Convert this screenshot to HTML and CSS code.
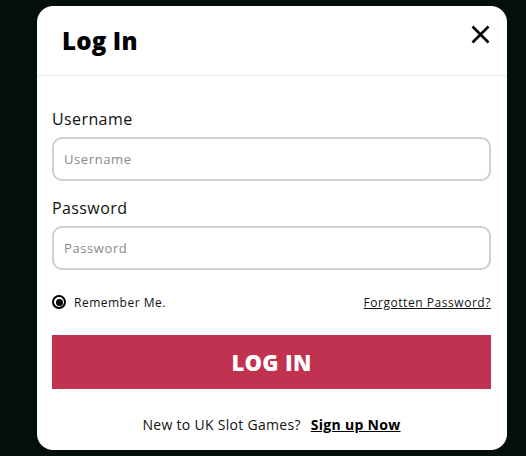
FILE: index.html
```html
<!DOCTYPE html>
<html>
<head>
<meta charset="utf-8">
<link rel="stylesheet" href="styles.css">
</head>
<body>
<div class="modal">
  <div class="modal-header">
    <h1 class="title">Log In</h1>
    <button class="close" aria-label="Close">
      <svg width="19" height="19" viewBox="0 0 19 19"><path d="M1.5 1.5 L17.5 17.5 M17.5 1.5 L1.5 17.5" stroke="#000" stroke-width="2.6" stroke-linecap="butt"/></svg>
    </button>
  </div>
  <form class="modal-body">
    <label class="label">Username</label>
    <input class="field" type="text" placeholder="Username">
    <label class="label label-gap">Password</label>
    <input class="field" type="password" placeholder="Password">
    <div class="options">
      <span class="remember"><span class="radio"></span>Remember Me.</span>
      <a class="forgot" href="#">Forgotten Password?</a>
    </div>
    <button class="submit" type="button">LOG IN</button>
    <p class="footer">New to UK Slot Games? <a class="signup" href="#">Sign up Now</a></p>
  </form>
</div>
</body>
</html>
```
FILE: styles.css
```css
html, body {
  margin: 0;
  padding: 0;
  background: #020f0a;
  font-family: "Open Sans", "Noto Sans", sans-serif;
}
body {
  padding: 6px 0 0 37px;
  height: 456px;
  box-sizing: border-box;
}
.modal {
  width: 470px;
  height: 444px;
  background: #fff;
  border-radius: 16px;
  overflow: hidden;
  display: flex;
  flex-direction: column;
}
.modal-header {
  height: 69px;
  border-bottom: 1px solid #ebebeb;
  display: flex;
  align-items: center;
  justify-content: space-between;
  padding: 0 17px 0 25px;
}
.title {
  margin: 0;
  font-size: 24px;
  font-weight: 800;
  color: #000;
  letter-spacing: 0.2px;
}
.close {
  border: 0;
  background: none;
  padding: 0;
  width: 19px;
  height: 19px;
  margin-top: -13px;
  display: block;
}
.close svg { display: block; }
.modal-body {
  display: flex;
  flex-direction: column;
  padding: 31px 16px 0 15px;
  margin: 0;
}
.label {
  font-size: 16px;
  line-height: 24px;
  color: #111;
  margin-bottom: 6px;
  letter-spacing: 0.4px;
}
.label-gap { margin-top: 15px; }
.field {
  height: 44px;
  box-sizing: border-box;
  border: 2px solid #cfcfcf;
  border-radius: 10px;
  padding: 0 10px;
  font-family: inherit;
  font-size: 13px;
  letter-spacing: 0.6px;
  color: #333;
  outline: none;
}
.field::placeholder { color: #8a8a8a; }
.options {
  margin-top: 22px;
  height: 20px;
  display: flex;
  align-items: center;
  justify-content: space-between;
}
.remember {
  display: flex;
  align-items: center;
  font-size: 12px;
  letter-spacing: 0.5px;
  color: #111;
}
.radio {
  width: 14px;
  height: 14px;
  box-sizing: border-box;
  border: 2px solid #000;
  border-radius: 50%;
  margin-right: 8px;
  position: relative;
}
.radio::after {
  content: "";
  position: absolute;
  left: 1.5px;
  top: 1.5px;
  width: 7px;
  height: 7px;
  border-radius: 50%;
  background: #000;
}
.forgot {
  font-size: 12px;
  letter-spacing: 0.55px;
  color: #111;
  text-decoration: underline;
}
.submit {
  margin-top: 23px;
  height: 54px;
  border: 0;
  background: #c13150;
  color: #fff;
  font-family: inherit;
  font-size: 22px;
  font-weight: 800;
  letter-spacing: 0.3px;
}
.footer {
  margin: 26px 0 0;
  line-height: 20px;
  text-align: center;
  font-size: 14px;
  letter-spacing: 0.3px;
  color: #111;
}
.signup {
  margin-left: 6px;
  color: #000;
  font-weight: 700;
  text-decoration: underline;
}
```
